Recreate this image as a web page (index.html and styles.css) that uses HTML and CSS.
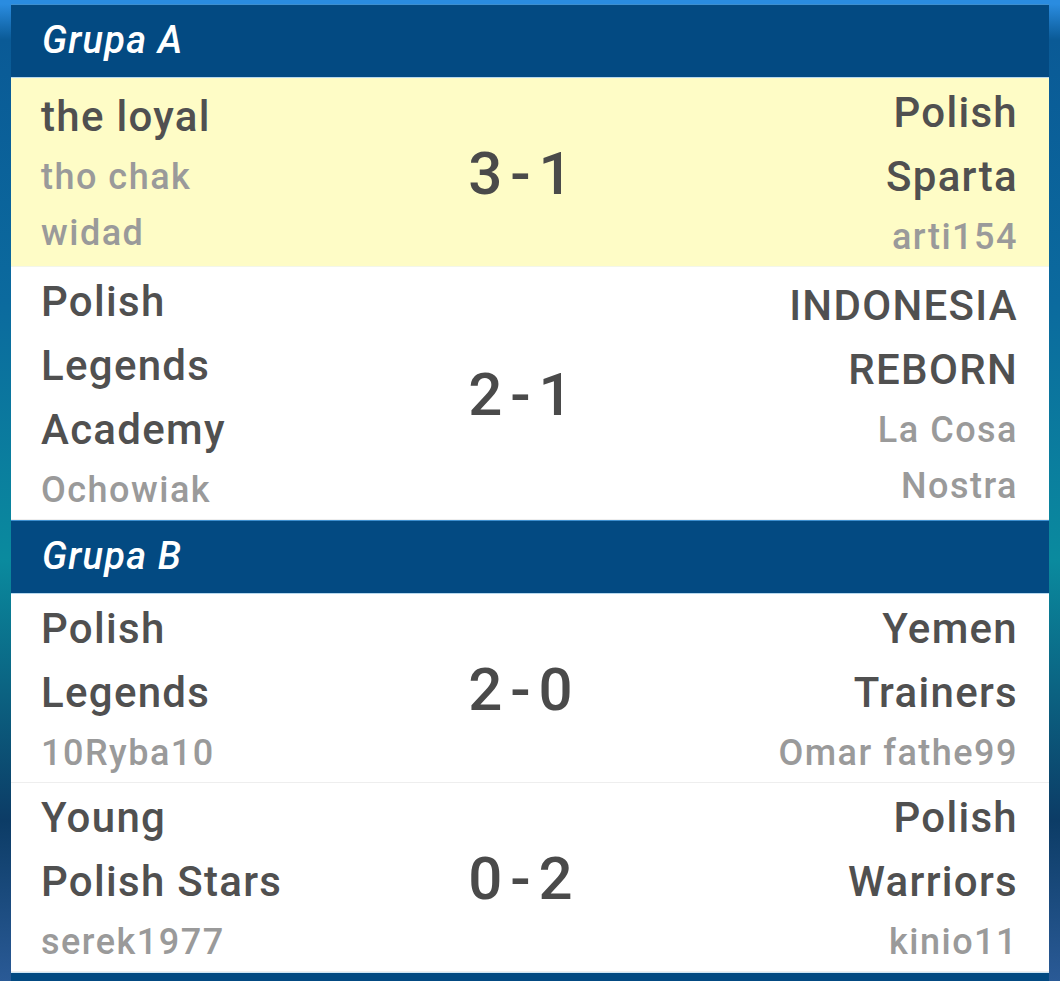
FILE: index.html
```html
<!DOCTYPE html>
<html lang="pl">
<head>
<meta charset="utf-8">
<title>Grupy</title>
<link rel="stylesheet" href="styles.css">
</head>
<body>
<div class="card">
  <div class="group-head">Grupa A</div>
  <div class="match highlight">
    <div class="side left">
      <div class="team">the loyal</div>
      <div class="player">tho chak</div>
      <div class="player">widad</div>
    </div>
    <div class="score">3 - 1</div>
    <div class="side right">
      <div class="team">Polish</div>
      <div class="team">Sparta</div>
      <div class="player">arti154</div>
    </div>
  </div>
  <div class="match">
    <div class="side left">
      <div class="team">Polish</div>
      <div class="team">Legends</div>
      <div class="team">Academy</div>
      <div class="player">Ochowiak</div>
    </div>
    <div class="score">2 - 1</div>
    <div class="side right">
      <div class="team">INDONESIA</div>
      <div class="team">REBORN</div>
      <div class="player">La Cosa</div>
      <div class="player">Nostra</div>
    </div>
  </div>
  <div class="group-head">Grupa B</div>
  <div class="match">
    <div class="side left">
      <div class="team">Polish</div>
      <div class="team">Legends</div>
      <div class="player">10Ryba10</div>
    </div>
    <div class="score">2 - 0</div>
    <div class="side right">
      <div class="team">Yemen</div>
      <div class="team">Trainers</div>
      <div class="player">Omar fathe99</div>
    </div>
  </div>
  <div class="match">
    <div class="side left">
      <div class="team">Young</div>
      <div class="team">Polish Stars</div>
      <div class="player">serek1977</div>
    </div>
    <div class="score">0 - 2</div>
    <div class="side right">
      <div class="team">Polish</div>
      <div class="team">Warriors</div>
      <div class="player">kinio11</div>
    </div>
  </div>
  <div class="group-head tail"></div>
</div>
</body>
</html>
```
FILE: styles.css
```css
html, body {
  margin: 0;
  padding: 0;
}
body {
  width: 1060px;
  height: 981px;
  overflow: hidden;
  background: linear-gradient(180deg, #2a8ce0 0px, #2a8ce0 4px, #0a5a96 40px, #0b6a9e 300px, #0a8a9e 560px, #0c3c66 820px, #2a5a96 981px);
  font-family: Roboto, "Noto Sans", sans-serif;
  padding-top: 4px;
  box-sizing: border-box;
}
.card {
  margin: 0 11px;
  background: #ffffff;
}
.group-head {
  height: 74px;
  box-sizing: border-box;
  background: #034a82;
  border-top: 1px solid #3d8fd0;
  border-bottom: 1px solid #b6d8ee;
  color: #ffffff;
  font-style: italic;
  font-weight: 500;
  font-size: 38px;
  letter-spacing: 1.2px;
  line-height: 70px;
  padding-left: 31px;
}
.group-head.tail {
  height: 40px;
  border-top-color: #cfe6f5;
  border-bottom: none;
}
.match {
  display: grid;
  grid-template-columns: 1fr 200px 1fr;
  align-items: center;
  padding: 3px 31px 1px 30px;
  background: #ffffff;
  border-bottom: 1px solid #eeeeee;
}
.match.highlight {
  background: #fefcc6;
  border-bottom-color: #f3f6ea;
}
.side.right {
  text-align: right;
}
.team {
  font-size: 42px;
  line-height: 64px;
  font-weight: 500;
  letter-spacing: 1.3px;
  color: #505050;
  white-space: nowrap;
}
.player {
  font-size: 36px;
  line-height: 56px;
  font-weight: 500;
  letter-spacing: 1.5px;
  color: #9a9a9a;
  white-space: nowrap;
}
.score {
  text-align: center;
  font-size: 60px;
  font-weight: 500;
  word-spacing: -7px;
  color: #4a4a4a;
  margin-left: -18px;
}
```
